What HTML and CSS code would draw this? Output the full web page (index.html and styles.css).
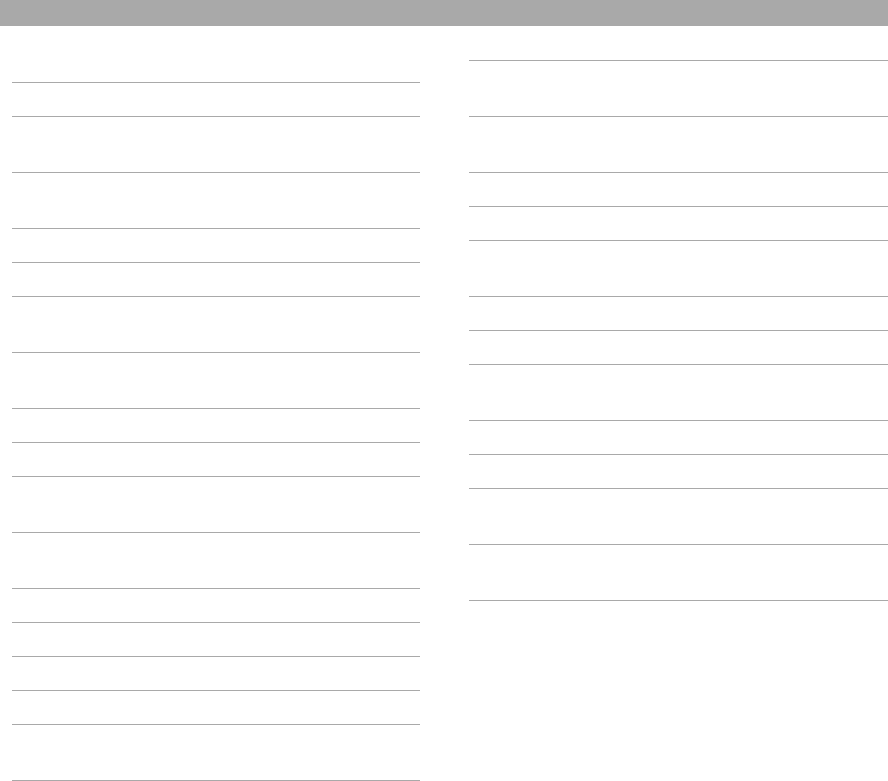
FILE: index.html
```html
<!DOCTYPE html>
<html lang="en">
<head>
    <meta charset="UTF-8">
    <meta name="viewport" content="width=device-width, initial-scale=1.0">
    <title>List</title>
    <link rel="stylesheet" href="styles.css">
</head>
<body class="body">
    <div class="topbar"></div>

    <div class="columns">
        <ul class="list">
            <li class="row tall"></li>
            <li class="row"></li>
            <li class="row tall"></li>
            <li class="row tall"></li>
            <li class="row"></li>
            <li class="row"></li>
            <li class="row tall"></li>
            <li class="row tall"></li>
            <li class="row"></li>
            <li class="row"></li>
            <li class="row tall"></li>
            <li class="row tall"></li>
            <li class="row"></li>
            <li class="row"></li>
            <li class="row"></li>
            <li class="row"></li>
            <li class="row tall"></li>
        </ul>

        <ul class="list">
            <li class="row"></li>
            <li class="row tall"></li>
            <li class="row tall"></li>
            <li class="row"></li>
            <li class="row"></li>
            <li class="row tall"></li>
            <li class="row"></li>
            <li class="row"></li>
            <li class="row tall"></li>
            <li class="row"></li>
            <li class="row"></li>
            <li class="row tall"></li>
            <li class="row tall"></li>
        </ul>
    </div>
</body>
</html>
```

FILE: styles.css
```css
.body {
    margin: 0;
    background-color: #ffffff;
    font-family: "Liberation Sans", Arial, sans-serif;
}

.topbar {
    height: 26px;
    background-color: #a9a9a9;
}

.columns {
    display: grid;
    grid-template-columns: 408px 419px;
    column-gap: 49px;
    padding: 1px 0 0 12px;
    align-items: start;
}

.list {
    list-style: none;
    margin: 0;
    padding: 0;
}

.row {
    box-sizing: border-box;
    height: 34px;
    border-bottom: 1px solid #a9a9a9;
}

.row.tall {
    height: 56px;
}
```
